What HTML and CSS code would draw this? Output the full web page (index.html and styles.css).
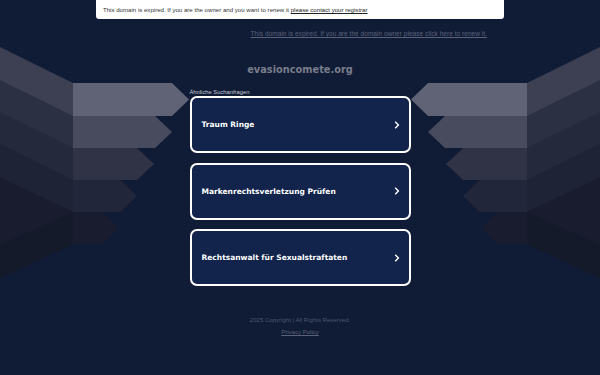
FILE: index.html
```html
<!DOCTYPE html>
<html lang="de">
<head>
<meta charset="utf-8">
<title>evasioncomete.org</title>
<link rel="stylesheet" href="styles.css">
</head>
<body>
<svg class="wings" width="600" height="375" viewBox="0 0 600 375" aria-hidden="true">
  <g id="wing">
    <polygon points="0,47 73,83 73,116 0,150" fill="#3c4052"/>
    <polygon points="0,80 73,116 73,148 0,182" fill="#2c3043"/>
    <polygon points="0,112 73,148 73,180 0,214" fill="#25293c"/>
    <polygon points="0,144 73,180 73,212 0,246" fill="#1f2336"/>
    <polygon points="0,177 73,212 73,244 0,278" fill="#181c2e"/>
    <polygon points="0,245 73,212 73,244 0,278" fill="#151a2b"/>
    <polygon points="73,83 172,83 189,99.5 172,116 73,116" fill="#5f6375"/>
    <polygon points="73,116 155,116 172,132 155,148 73,148" fill="#474b5d"/>
    <polygon points="73,148 137,148 154,164 137,180 73,180" fill="#2f3345"/>
    <polygon points="73,180 120,180 137,196 120,212 73,212" fill="#22263a"/>
    <polygon points="73,212 103,212 119,228 103,244 73,244" fill="#181c2e"/>
  </g>
  <use href="#wing" transform="translate(600,0) scale(-1,1)"/>
</svg>

<div class="page">
  <div class="banner">This domain is expired. If you are the owner and you want to renew it&nbsp;<a href="#">please contact your registrar</a></div>
  <div class="renew"><a href="#">This domain is expired. If you are the domain owner please click here to renew it.</a></div>
  <h1 class="domain">evasioncomete.org</h1>
  <div class="related">
    <div class="label">Ähnliche Suchanfragen</div>
    <a class="card" href="#"><span>Traum Ringe</span><svg class="chev" width="6" height="8" viewBox="0 0 6 8"><polyline points="1.2,0.8 4.4,4 1.2,7.2" fill="none" stroke="#fff" stroke-width="1.4"/></svg></a>
    <a class="card" href="#"><span>Markenrechtsverletzung Prüfen</span><svg class="chev" width="6" height="8" viewBox="0 0 6 8"><polyline points="1.2,0.8 4.4,4 1.2,7.2" fill="none" stroke="#fff" stroke-width="1.4"/></svg></a>
    <a class="card" href="#"><span>Rechtsanwalt für Sexualstraftaten</span><svg class="chev" width="6" height="8" viewBox="0 0 6 8"><polyline points="1.2,0.8 4.4,4 1.2,7.2" fill="none" stroke="#fff" stroke-width="1.4"/></svg></a>
  </div>
  <div class="footer">
    <div class="copy">2025 Copyright | All Rights Reserved.</div>
    <a class="privacy" href="#">Privacy Policy</a>
  </div>
</div>
</body>
</html>
```
FILE: styles.css
```css
html, body {
  margin: 0;
  padding: 0;
}
body {
  width: 600px;
  height: 375px;
  overflow: hidden;
  background: #101b35;
  position: relative;
  font-family: "Liberation Sans", Arial, sans-serif;
}
.wings {
  position: absolute;
  top: 0;
  left: 0;
  z-index: 0;
}
.page {
  position: relative;
  z-index: 1;
  display: flex;
  flex-direction: column;
  align-items: center;
}
.banner {
  box-sizing: border-box;
  width: 408px;
  height: 19px;
  background: #ffffff;
  border-radius: 0 0 3px 3px;
  padding: 0 0 0 7px;
  display: flex;
  align-items: center;
  font-size: 6.1px;
  color: #333333;
  white-space: nowrap;
}
.banner a {
  color: #222222;
  text-decoration: underline;
}
.renew {
  box-sizing: border-box;
  width: 408px;
  margin-top: 11px;
  padding-right: 17px;
  text-align: right;
  font-size: 6.6px;
  line-height: 8px;
  white-space: nowrap;
}
.renew a {
  color: #5a6279;
  text-decoration: underline;
}
.domain {
  margin: 26px 0 0;
  font-family: "DejaVu Sans", Verdana, sans-serif;
  font-weight: bold;
  font-size: 9.8px;
  line-height: 12px;
  color: #787d8b;
}
.related {
  width: 221px;
  margin-top: 13px;
  display: flex;
  flex-direction: column;
}
.label {
  font-size: 5.8px;
  line-height: 7px;
  color: #c6c9d2;
}
.card {
  box-sizing: border-box;
  height: 57px;
  border: 2px solid #ffffff;
  border-radius: 7px;
  background: #12244c;
  display: flex;
  align-items: center;
  justify-content: space-between;
  padding: 0 9px 0 10px;
  text-decoration: none;
  color: #ffffff;
  font-family: "DejaVu Sans", Verdana, sans-serif;
  font-weight: bold;
  font-size: 7.5px;
}
.card + .card {
  margin-top: 9.5px;
}
.chev {
  display: block;
}
.footer {
  margin-top: 30px;
  display: flex;
  flex-direction: column;
  align-items: center;
  font-size: 6.05px;
  color: #4e5670;
}
.copy {
  line-height: 8px;
}
.privacy {
  margin-top: 4px;
  line-height: 8px;
  color: #5a6279;
  text-decoration: underline;
}
```
